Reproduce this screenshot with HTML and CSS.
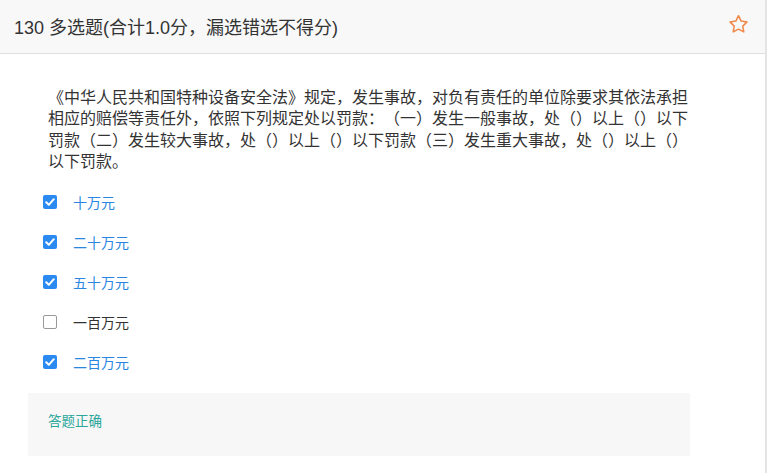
FILE: index.html
```html
<!DOCTYPE html>
<html lang="zh-CN">
<head>
<meta charset="utf-8">
<title>130 多选题</title>
<link rel="stylesheet" href="styles.css">
</head>
<body>
<div class="page">
  <div class="header">
    <div class="title">130 多选题(合计1.0分，漏选错选不得分)</div>
    <svg class="star" width="23" height="23" viewBox="0 0 24 24">
      <path d="M12 2.8l2.75 5.6 6.15.9-4.45 4.35 1.05 6.12L12 16.87l-5.5 2.9 1.05-6.12L3.1 9.3l6.15-.9z" fill="none" stroke="#f0894a" stroke-width="1.6" stroke-linejoin="round"/>
    </svg>
  </div>
  <div class="content">
    <div class="question">《中华人民共和国特种设备安全法》规定，发生事故，对负有责任的单位除要求其依法承担相应的赔偿等责任外，依照下列规定处以罚款：（一）发生一般事故，处（）以上（）以下罚款（二）发生较大事故，处（）以上（）以下罚款（三）发生重大事故，处（）以上（）以下罚款。</div>
    <ul class="options">
      <li class="option checked"><span class="box"><svg width="14" height="14" viewBox="0 0 14 14"><path d="M3.2 7.2l2.6 2.6 5-5.6" fill="none" stroke="#fff" stroke-width="2" stroke-linecap="round" stroke-linejoin="round"/></svg></span><span class="label">十万元</span></li>
      <li class="option checked"><span class="box"><svg width="14" height="14" viewBox="0 0 14 14"><path d="M3.2 7.2l2.6 2.6 5-5.6" fill="none" stroke="#fff" stroke-width="2" stroke-linecap="round" stroke-linejoin="round"/></svg></span><span class="label">二十万元</span></li>
      <li class="option checked"><span class="box"><svg width="14" height="14" viewBox="0 0 14 14"><path d="M3.2 7.2l2.6 2.6 5-5.6" fill="none" stroke="#fff" stroke-width="2" stroke-linecap="round" stroke-linejoin="round"/></svg></span><span class="label">五十万元</span></li>
      <li class="option"><span class="box"></span><span class="label">一百万元</span></li>
      <li class="option checked"><span class="box"><svg width="14" height="14" viewBox="0 0 14 14"><path d="M3.2 7.2l2.6 2.6 5-5.6" fill="none" stroke="#fff" stroke-width="2" stroke-linecap="round" stroke-linejoin="round"/></svg></span><span class="label">二百万元</span></li>
    </ul>
    <div class="result">答题正确</div>
  </div>
</div>
</body>
</html>
```
FILE: styles.css
```css
html, body {
  margin: 0;
  padding: 0;
  background: #fff;
}
.page {
  width: 765px;
  height: 473px;
  border-right: 2px solid #e4e4e4;
  box-sizing: content-box;
  font-family: "Liberation Sans", "Noto Sans CJK SC", sans-serif;
  color: #333;
  overflow: hidden;
  text-spacing-trim: space-all;
}
.header {
  height: 53px;
  background: #f8f8f8;
  border-bottom: 1px solid #dedede;
  display: flex;
  align-items: center;
  justify-content: space-between;
  padding: 0 15px 0 14px;
}
.title {
  font-size: 18px;
  color: #333;
  padding-bottom: 2px;
}
.star {
  display: block;
  margin-bottom: 4px;
}
.content {
  padding: 32px 0 0 28px;
}
.question {
  width: 646px;
  padding-left: 20px;
  font-family: "Noto Sans CJK SC", sans-serif;
  font-size: 16px;
  line-height: 21.3px;
  color: #333;
}
.options {
  list-style: none;
  margin: 11px 0 0 0;
  padding: 0;
}
.option {
  height: 40px;
  display: flex;
  align-items: center;
  padding-left: 15px;
}
.box {
  width: 14px;
  height: 14px;
  box-sizing: border-box;
  border: 1px solid #999;
  border-radius: 2px;
  background: #fff;
  display: flex;
}
.checked .box {
  border: none;
  background: #2a8af0;
}
.label {
  margin-left: 16px;
  font-family: "Noto Sans CJK SC", sans-serif;
  font-size: 14px;
  color: #333;
}
.checked .label {
  color: #2a86e0;
}
.result {
  margin-top: 11px;
  width: 662px;
  height: 63px;
  box-sizing: border-box;
  background: #f7f7f7;
  padding: 17px 20px;
  font-family: "Noto Sans CJK SC", sans-serif;
  font-size: 13.5px;
  color: #2aa69a;
}
```
